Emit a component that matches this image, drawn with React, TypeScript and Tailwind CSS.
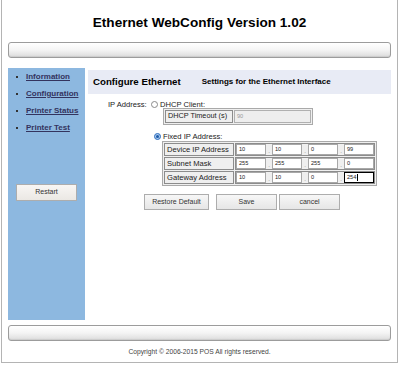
import React from 'react';

const font = "font-['Liberation_Sans',Arial,sans-serif]";

const Radio: React.FC<{ checked?: boolean }> = ({ checked }) =>
  checked ? (
    <span className="flex h-[7px] w-[7px] items-center justify-center rounded-full border border-[#2f6fbf] bg-[#a9c9ee]">
      <span className="h-[3px] w-[3px] rounded-full bg-[#1d5aa8]" />
    </span>
  ) : (
    <span className="h-[7px] w-[7px] rounded-full border border-[#8a8a8a] bg-white" />
  );

const Bar: React.FC = () => (
  <div className="h-[16px] rounded-[3px] border border-[#9c9c9c] bg-gradient-to-b from-white via-[#f4f4f4] to-[#dcdcdc] shadow-[inset_0_-1px_1px_rgba(0,0,0,0.08)]" />
);

const Btn: React.FC<{ label: string; className?: string }> = ({ label, className }) => (
  <div
    className={`flex h-[16px] items-center justify-center border border-[#adadad] bg-gradient-to-b from-[#f7f7f7] to-[#e6e6e6] text-[7px] text-[#333] ${className ?? ''}`}
  >
    {label}
  </div>
);

const IpBox: React.FC<{ value: string; focused?: boolean }> = ({ value, focused }) => (
  <div
    className={`flex h-[11px] w-[30px] items-center bg-white pl-[2px] text-[5.6px] text-[#222] ${
      focused ? 'border border-black' : 'border border-[#a8a8a8]'
    }`}
  >
    {value}
    {focused && <span className="ml-[0.5px] h-[7px] w-px bg-black" />}
  </div>
);

const Dot: React.FC = () => (
  <span className="flex h-[11px] w-[6px] items-end justify-center pb-[1px] text-[6px] leading-none text-[#777]">.</span>
);

const IpRow: React.FC<{ label: string; values: string[]; focusLast?: boolean }> = ({ label, values, focusLast }) => (
  <div className="flex h-[13px] gap-[1px]">
    <div className="flex w-[70px] items-center border border-[#8c8c8c] pl-[2px] text-[7.6px] text-[#222]">{label}</div>
    <div className="flex flex-1 items-center border border-[#8c8c8c]">
      <IpBox value={values[0]} />
      <Dot />
      <IpBox value={values[1]} />
      <Dot />
      <IpBox value={values[2]} />
      <Dot />
      <IpBox value={values[3]} focused={focusLast} />
    </div>
  </div>
);

const NavLink: React.FC<{ label: string }> = ({ label }) => (
  <li className="flex h-[17px] items-center">
    <span className="ml-[8px] h-[2px] w-[2px] bg-[#333]" />
    <span className="ml-[8px] text-[8px] font-bold text-[#33335e] underline">{label}</span>
  </li>
);

export default function App() {
  return (
    <div className={`${font} h-[365px] w-[400px] bg-white`}>
      <div className="ml-[1px] flex h-[363px] w-[397px] flex-col border-x border-b border-[#b4b4b4] px-[6px]">
        <h1 className="pt-[15px] text-center text-[13.6px] font-bold leading-[16px] text-black">
          Ethernet WebConfig Version 1.02
        </h1>

        <div className="mt-[11px]">
          <Bar />
        </div>

        <div className="mt-[10px] flex">
          {/* Sidebar */}
          <div className="flex h-[252px] w-[77px] flex-col bg-[#8db8e0]">
            <ul className="flex flex-col">
              <NavLink label="Information" />
              <NavLink label="Configuration" />
              <NavLink label="Printer Status" />
              <NavLink label="Printer Test" />
            </ul>
            <Btn label="Restart" className="ml-[8px] mt-[48px] h-[17px] w-[61px] from-[#f8f6f4] to-[#ebe8e4]" />
          </div>

          {/* Content */}
          <div className="ml-[3px] flex-1 pt-[2px]">
            <div className="flex h-[24px] items-center bg-[#e8ebf5] pl-[5px]">
              <span className="text-[9.7px] font-bold text-black">Configure Ethernet</span>
              <span className="ml-[21px] text-[8px] font-bold text-black">Settings for the Ethernet Interface</span>
            </div>

            <div className="mt-[7px] flex">
              <div className="w-[63px] pl-[20px] text-[7.6px] leading-[7px] text-[#222]">IP Address:</div>
              <div className="flex flex-col">
                <div className="flex h-[7px] items-center gap-[2px] text-[7.6px] text-[#222]">
                  <Radio />
                  <span>DHCP Client:</span>
                </div>
                <div className="ml-[12px] flex h-[17px] w-[150px] gap-[1px] border border-[#a9a9a9] bg-[#efefef] p-[1px]">
                  <div className="flex w-[68px] items-center border border-[#8c8c8c] pl-[2px] text-[7.3px] text-[#222]">
                    DHCP Timeout (s)
                  </div>
                  <div className="flex flex-1 items-center border border-[#b0b0b0] bg-[#eeeeee] pl-[2px] text-[5.6px] text-[#999]">
                    90
                  </div>
                </div>

                <div className="ml-[3px] mt-[8px] flex h-[7px] items-center gap-[2px] text-[7.6px] text-[#222]">
                  <Radio checked />
                  <span>Fixed IP Address:</span>
                </div>
                <div className="ml-[11px] mt-[1px] flex w-[215px] flex-col gap-[1px] border border-[#a9a9a9] bg-[#efefef] p-[1px]">
                  <IpRow label="Device IP Address" values={['10', '10', '0', '99']} />
                  <IpRow label="Subnet Mask" values={['255', '255', '255', '0']} />
                  <IpRow label="Gateway Address" values={['10', '10', '0', '254']} focusLast />
                </div>
              </div>
            </div>

            <div className="ml-[56px] mt-[8px] flex">
              <Btn label="Restore Default" className="w-[65px]" />
              <Btn label="Save" className="ml-[7px] w-[61px]" />
              <Btn label="cancel" className="ml-[2px] w-[61px]" />
            </div>
          </div>
        </div>

        <div className="mt-[5px]">
          <Bar />
        </div>

        <p className="mt-[7px] text-center text-[6.7px] leading-[8px] text-[#444]">
          Copyright © 2006-2015 POS All rights reserved.
        </p>
      </div>
    </div>
  );
}
